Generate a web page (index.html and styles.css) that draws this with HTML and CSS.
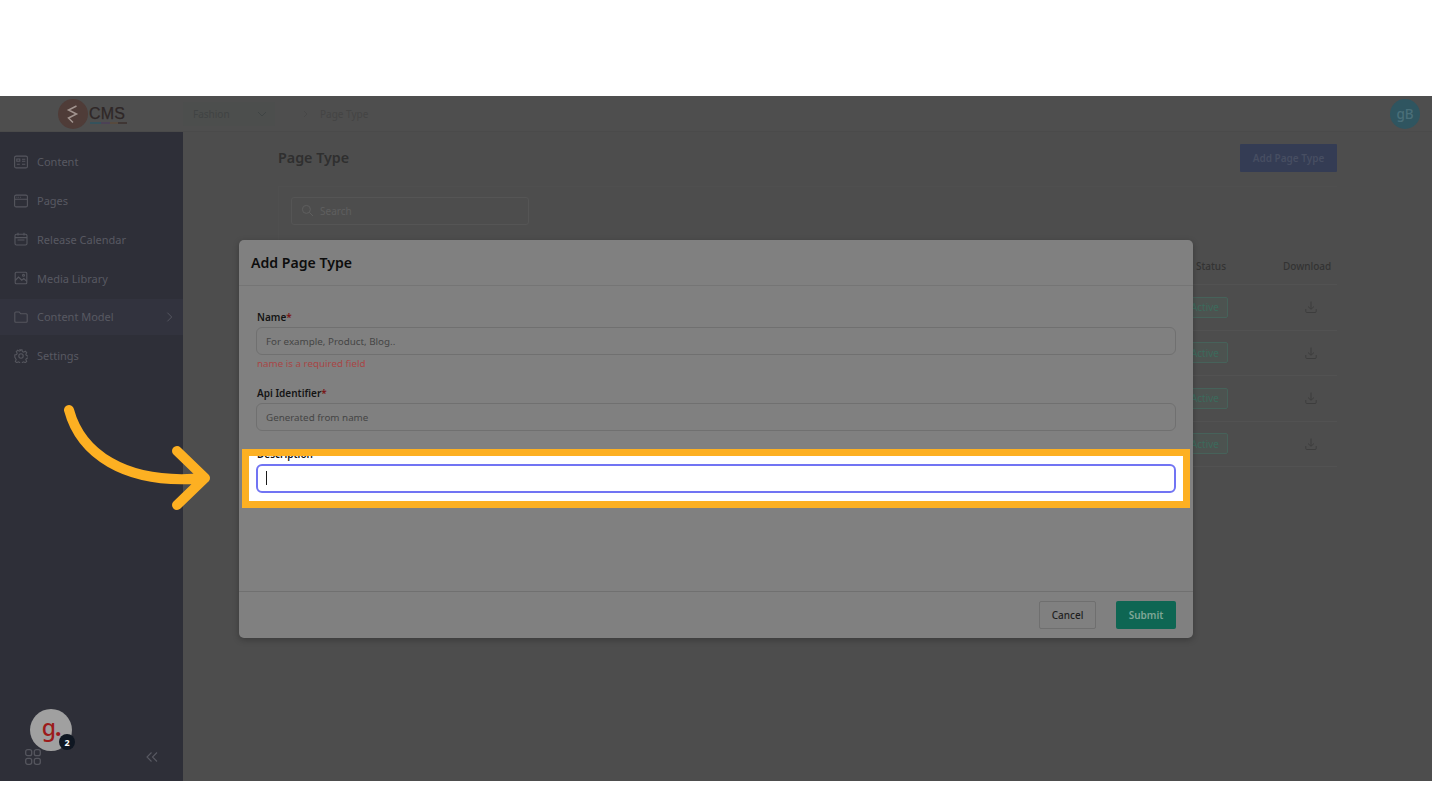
FILE: index.html
```html
<!DOCTYPE html>
<html lang="en">
<head>
<meta charset="utf-8">
<title>Add Page Type</title>
<link rel="stylesheet" href="styles.css">
</head>
<body>
<div class="frame">
  <header class="topbar">
    <div class="logo">
      <span class="logo-mark">
        <svg viewBox="0 0 30 30" width="30" height="30"><path d="M18.500 7 10.500 11 18.500 15 10.500 19 15 23.500" fill="none" stroke="#a2948f" stroke-width="1.500"/></svg>
      </span>
      <span class="logo-text">CMS<span class="logo-line"></span></span>
    </div>
    <div class="select">Fashion
      <svg viewBox="0 0 12 12" width="12" height="12"><path d="M2 4l4 4 4-4" fill="none" stroke="#3f4444" stroke-width="1"/></svg>
    </div>
    <div class="crumb">
      <svg viewBox="0 0 8 10" width="8" height="10"><path d="M2 2l3 3-3 3" fill="none" stroke="#454545" stroke-width=".8"/></svg>
      Page Type
    </div>
    <div class="avatar">gB</div>
  </header>
  <div class="below">
    <nav class="sidebar">
      <a class="nav-item"><svg class="nav-icon" viewBox="0 0 14 14"><rect x=".6" y="1.100" width="12.800" height="11.800" rx="1.500"/><path d="M2.800 4h3v2.200h-3zM8 4.300h3.300M8 6.300h3.300M2.800 9.300h3M8 9.300h3.300"/></svg>Content</a>
      <a class="nav-item"><svg class="nav-icon" viewBox="0 0 14 14"><rect x=".6" y="1.100" width="12.800" height="11.800" rx="1.500"/><path d="M.6 5.300h12.800M2.500 3.300h.8M4.300 3.300h.8M6.100 3.300h.8"/></svg>Pages</a>
      <a class="nav-item"><svg class="nav-icon" viewBox="0 0 14 14"><rect x="1" y="2.200" width="12" height="10.800" rx="1.500"/><path d="M1 5.600h12M4 .8v2.800M10 .8v2.800M3.500 8h7"/></svg>Release Calendar</a>
      <a class="nav-item"><svg class="nav-icon" viewBox="0 0 14 14"><rect x="1.200" y="1.200" width="11.600" height="11.600" rx="1"/><path d="M1.200 9.500 4.500 6l3.300 3.200 2-1.700 3 2.800"/><circle cx="9.500" cy="4.300" r="1"/></svg>Media Library</a>
      <a class="nav-item nav-active"><svg class="nav-icon" viewBox="0 0 14 14"><path d="M.8 3a1 1 0 0 1 1-1h3.400l1.500 1.800h5.500a1 1 0 0 1 1 1v6.400a1 1 0 0 1-1 1H1.800a1 1 0 0 1-1-1z"/></svg>Content Model
        <svg class="nav-caret" viewBox="0 0 8 12"><path d="M1.500 1 6.500 6l-5 5"/></svg></a>
      <a class="nav-item"><svg class="nav-icon" viewBox="0 0 14 14"><circle cx="7" cy="7" r="2.200"/><path d="M6 .8h2l.4 1.800 1.300.6 1.600-.9 1.400 1.400-.9 1.600.6 1.300 1.800.4v2l-1.800.4-.6 1.300.9 1.600-1.400 1.400-1.600-.9-1.300.6-.4 1.800H6l-.4-1.800-1.300-.6-1.600.9-1.400-1.400.9-1.600-.6-1.300L.8 8V6l1.800-.4.6-1.300-.9-1.600 1.400-1.400 1.600.9 1.300-.6z"/></svg>Settings</a>
      <div class="side-foot">
        <svg class="apps" viewBox="0 0 16 16"><rect x=".7" y=".7" width="6" height="6" rx="2"/><rect x="9.300" y=".7" width="6" height="6" rx="2"/><rect x=".7" y="9.300" width="6" height="6" rx="2"/><rect x="9.300" y="9.300" width="6" height="6" rx="2"/></svg>
        <svg class="collapse" viewBox="0 0 12 10"><path d="M5.500 .5 1 5l4.500 4.500M11 .5 6.500 5l4.500 4.500"/></svg>
      </div>
    </nav>
    <main class="main">
      <div class="page-head">
        <h1 class="page-title">Page Type</h1>
        <button class="btn-add">Add Page Type</button>
      </div>
      <section class="card">
        <div class="search">
          <svg viewBox="0 0 14 14" width="13" height="13"><circle cx="5.800" cy="5.800" r="4.300" fill="none" stroke="#5f5f5f" stroke-width="1"/><path d="M9 9l4 4" stroke="#5f5f5f" stroke-width="1"/></svg>
          Search
        </div>
        <div class="row row-head"><span class="th-status">Status</span><span class="th-dl">Download</span></div>
        <div class="row"><span class="badge">Active</span><span class="dl"><svg viewBox="0 0 14 14" width="14" height="14"><path d="M7 1.500v7.500M4 6.500 7 9.300l3-2.800M1.800 9v2.500a1 1 0 0 0 1 1h8.400a1 1 0 0 0 1-1V9"/></svg></span></div>
        <div class="row"><span class="badge">Active</span><span class="dl"><svg viewBox="0 0 14 14" width="14" height="14"><path d="M7 1.500v7.500M4 6.500 7 9.300l3-2.800M1.800 9v2.500a1 1 0 0 0 1 1h8.400a1 1 0 0 0 1-1V9"/></svg></span></div>
        <div class="row"><span class="badge">Active</span><span class="dl"><svg viewBox="0 0 14 14" width="14" height="14"><path d="M7 1.500v7.500M4 6.500 7 9.300l3-2.800M1.800 9v2.500a1 1 0 0 0 1 1h8.400a1 1 0 0 0 1-1V9"/></svg></span></div>
        <div class="row"><span class="badge">Active</span><span class="dl"><svg viewBox="0 0 14 14" width="14" height="14"><path d="M7 1.500v7.500M4 6.500 7 9.300l3-2.800M1.800 9v2.500a1 1 0 0 0 1 1h8.400a1 1 0 0 0 1-1V9"/></svg></span></div>
      </section>
    </main>
  </div>

  <div class="overlay">
    <div class="modal">
      <div class="modal-head">Add Page Type</div>
      <div class="modal-body">
        <label class="label">Name<span class="req">*</span></label>
        <div class="input">For example, Product, Blog..</div>
        <div class="error">name is a required field</div>
        <label class="label label-api">Api Identifier<span class="req">*</span></label>
        <div class="input">Generated from name</div>
      </div>
      <div class="modal-foot">
        <button class="btn-cancel">Cancel</button>
        <button class="btn-submit">Submit</button>
      </div>
      <div class="highlight">
        <div class="hl-label">Description</div>
        <div class="hl-input"><span class="caret"></span></div>
      </div>
    </div>
  </div>

  <svg class="arrow" viewBox="0 0 160 110" width="160" height="110"><path d="M9 9C20 50 62 85 145 77M117 50l28 27-28 27" fill="none" stroke="#fdb022" stroke-width="10" stroke-linecap="round" stroke-linejoin="round"/></svg>

  <div class="launcher"><span class="launcher-g">g<span class="launcher-dot">.</span></span><span class="launcher-badge">2</span></div>
</div>
</body>
</html>
```
FILE: styles.css
```css
* { box-sizing: border-box; }
html, body { margin: 0; padding: 0; background: #fff; }
body { font-family: "Noto Sans", "Open Sans", sans-serif; height: 805px; overflow: hidden; padding-top: 96px; }
button { font-family: inherit; cursor: default; }

.frame { position: relative; height: 685px; background: #4d4d4d; display: flex; flex-direction: column; overflow: hidden; }

.topbar { height: 36px; flex: none; display: flex; align-items: center; background: #4e4e4e; border-bottom: 1px solid #4a4a4a; }
.logo { width: 183px; flex: none; display: flex; align-items: center; padding-left: 58px; }
.logo-mark { width: 30px; height: 30px; border-radius: 50%; background: #4f3c38; flex: none; display: flex; }
.logo-text { position: relative; font-family: "Liberation Sans", sans-serif; font-size: 16px; line-height: 18px; color: #2f2727; margin-left: 1px; letter-spacing: .2px; -webkit-text-stroke: .25px #2f2727; }
.logo-line { position: absolute; left: 1px; right: -2px; bottom: -1px; height: 2px; background: linear-gradient(90deg, #35525c 0 30%, #4c4256 30% 55%, #574a3e 55% 75%, #3f3634 75%); }
.select { width: 92px; height: 24px; display: flex; align-items: center; justify-content: space-between; padding: 0 7px 0 10px; font-size: 10px; color: #404343; background: #4c4e4d; border-radius: 2px; }
.crumb { display: flex; align-items: center; gap: 10px; margin-left: 27px; font-size: 10px; color: #444; }
.avatar { margin-left: auto; margin-right: 12px; width: 30px; height: 30px; border-radius: 50%; background: #2f5560; color: #4a6f79; font-size: 13.500px; font-weight: 500; display: flex; align-items: center; justify-content: center; }

.below { flex: 1; display: flex; min-height: 0; }
.sidebar { width: 183px; flex: none; background: #2e2f38; padding-top: 12px; display: flex; flex-direction: column; gap: 2.800px; }
.nav-item { position: relative; height: 36px; flex: none; display: flex; align-items: center; gap: 9px; padding-left: 14px; padding-bottom: .5px; font-size: 11px; color: #585962; }
.nav-active { background: #32333e; }
.nav-icon { width: 14px; height: 14px; flex: none; fill: none; stroke: #55565e; stroke-width: 1.100; }
.nav-caret { position: absolute; right: 10px; width: 7px; height: 12px; fill: none; stroke: #585962; stroke-width: 1; }
.side-foot { margin-top: auto; height: 48px; display: flex; align-items: center; justify-content: space-between; padding: 0 25px; }
.apps { width: 16px; height: 16px; fill: none; stroke: #55565e; stroke-width: 1.300; }
.collapse { width: 12px; height: 10px; fill: none; stroke: #585962; stroke-width: 1.100; }

.main { flex: 1; padding: 12px 95px 0; min-width: 0; }
.page-head { height: 28px; display: flex; align-items: center; justify-content: space-between; }
.page-title { margin: 0 0 1px; font-size: 14.300px; font-weight: 600; color: #2f2f2f; }
.btn-add { width: 97px; height: 28px; padding: 0; border: 0; border-radius: 1px; background: #343c54; color: #474e62; font-size: 10px; font-weight: 600; }

.card { margin-top: 14px; height: 281px; border: 1px solid #4f4f4f; border-right: 0; border-bottom: 0; padding-top: 10px; }
.search { margin-left: 12px; width: 238px; height: 28px; border: 1px solid #555; border-radius: 3px; display: flex; align-items: center; gap: 6px; padding-left: 9px; padding-bottom: 1px; font-size: 10px; color: #5f5f5f; }
.row { height: 45.500px; display: flex; align-items: center; justify-content: flex-end; border-bottom: 1px solid #525252; padding-right: 6px; }
.row-head { height: 37px; margin-top: 23px; padding-bottom: 1px; font-size: 10px; font-weight: 500; color: #333; }
.th-dl { width: 48px; margin-left: 57px; white-space: nowrap; }
.badge { width: 43px; height: 21px; margin-right: 55px; display: flex; align-items: center; justify-content: flex-end; padding-right: 8px; background: #4c5350; border: 1px solid #46625a; border-radius: 2px; color: #3c6a5c; font-size: 10px; }
.dl { width: 48px; display: flex; justify-content: center; padding-left: 8px; }
.dl svg { fill: none; stroke: #3d3d3d; stroke-width: 1; }

.overlay { position: absolute; inset: 0; display: flex; align-items: center; justify-content: center; }
.modal { position: relative; width: 954px; height: 398px; background: #808080; border-radius: 5px; display: flex; flex-direction: column; box-shadow: 0 2px 6px rgba(0,0,0,.25); }
.modal-head { height: 46px; flex: none; display: flex; align-items: center; padding: 1px 0 0 12px; font-size: 14.100px; font-weight: 600; color: #0d0d0d; border-bottom: 1px solid #757575; }
.modal-body { flex: 1; padding: 21px 17px 0; }
.label { display: block; height: 20px; line-height: 20px; font-size: 10px; font-weight: 600; color: #141414; padding-left: 1px; }
.label-api { margin-top: 11px; }
.req { color: #7a1414; }
.input { height: 28px; border: 1px solid #707070; border-radius: 6px; display: flex; align-items: center; padding: 1px 0 0 9px; font-size: 9.800px; color: #454545; }
.error { height: 17px; line-height: 17px; font-size: 9.800px; color: #a84646; padding-left: 1px; }
.modal-foot { height: 47px; flex: none; display: flex; align-items: center; justify-content: flex-end; gap: 20px; padding: 0 17px 0 0; border-top: 1px solid #707070; }
.btn-cancel { width: 57px; height: 28px; padding: 0; background: transparent; border: 1px solid #6f6f6f; border-radius: 2px; color: #1f1f1f; font-size: 10px; font-weight: 500; }
.btn-submit { width: 60px; height: 28px; padding: 0; background: #0e6653; border: 0; border-radius: 2px; color: #7fa697; font-size: 10px; font-weight: 600; }

.highlight { position: absolute; left: 3px; top: 209px; width: 948px; height: 59px; background: #fff; border: 7px solid #fdb022; overflow: hidden; }
.hl-label { margin: -9px 0 0 8px; height: 14px; line-height: 14px; font-size: 10px; font-weight: 600; color: #141414; }
.hl-input { margin: 3px 0 0 7px; width: 920px; height: 29px; border: 2px solid #7174f3; border-radius: 6px; display: flex; align-items: center; padding-left: 8px; }
.caret { width: 1px; height: 14px; background: #1a1a1a; }

.arrow { position: absolute; left: 60px; top: 305px; }

.launcher { position: absolute; left: 30px; top: 613px; width: 42px; height: 42px; border-radius: 50%; background: #a0a0a0; display: flex; align-items: center; justify-content: center; }
.launcher-g { font-size: 23px; line-height: 24px; font-weight: 500; color: #9c1a1a; margin-top: -7px; letter-spacing: -1px; }
.launcher-dot { font-weight: 700; }
.launcher-badge { position: absolute; left: 29px; top: 25px; width: 16px; height: 16px; border-radius: 50%; background: #0f1722; color: #fff; font-size: 9px; font-weight: 700; display: flex; align-items: center; justify-content: center; }
```
